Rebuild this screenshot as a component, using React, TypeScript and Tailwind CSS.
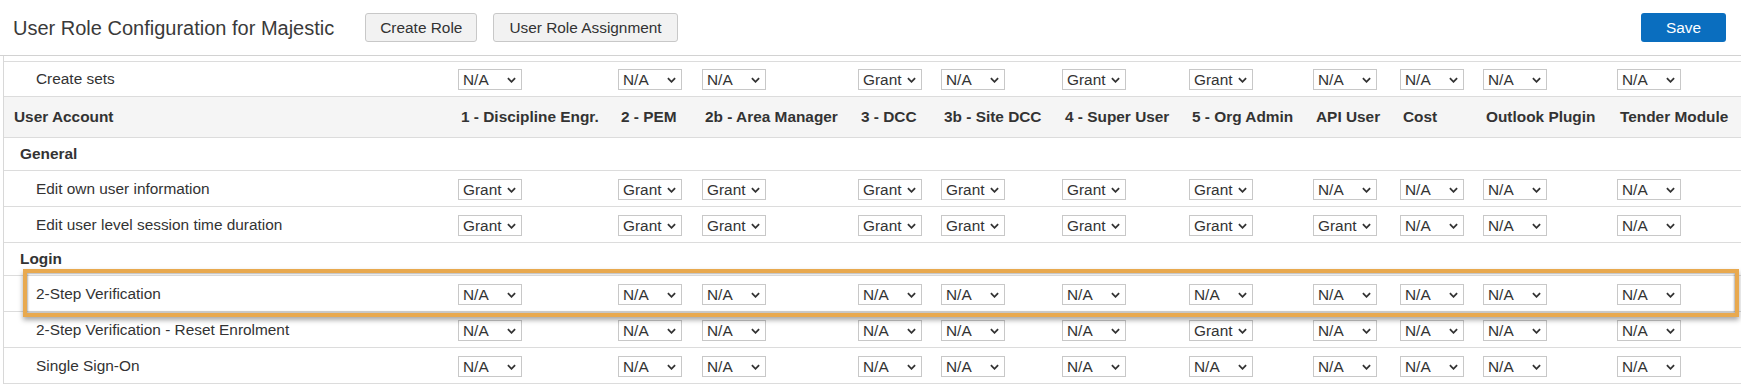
import React from 'react';

type Perm = 'N/A' | 'Grant';

const ROLES = [
  '1 - Discipline Engr.',
  '2 - PEM',
  '2b - Area Manager',
  '3 - DCC',
  '3b - Site DCC',
  '4 - Super User',
  '5 - Org Admin',
  'API User',
  'Cost',
  'Outlook Plugin',
  'Tender Module',
];

// column widths in px, first column is the label column
const COL_WIDTHS = [454, 160, 84, 156, 83, 121, 127, 124, 87, 83, 134, 124];

const G: Perm = 'Grant';
const N: Perm = 'N/A';

type Row =
  | { kind: 'section'; label: string }
  | { kind: 'item'; label: string; perms: Perm[] };

const ROWS: Row[] = [
  { kind: 'section', label: 'General' },
  { kind: 'item', label: 'Edit own user information', perms: [G, G, G, G, G, G, G, N, N, N, N] },
  { kind: 'item', label: 'Edit user level session time duration', perms: [G, G, G, G, G, G, G, G, N, N, N] },
  { kind: 'section', label: 'Login' },
  { kind: 'item', label: '2-Step Verification', perms: [N, N, N, N, N, N, N, N, N, N, N] },
  { kind: 'item', label: '2-Step Verification - Reset Enrolment', perms: [N, N, N, N, N, N, G, N, N, N, N] },
  { kind: 'item', label: 'Single Sign-On', perms: [N, N, N, N, N, N, N, N, N, N, N] },
];

const CREATE_SETS: Perm[] = [N, N, N, G, N, G, G, N, N, N, N];

const PermSelect: React.FC<{ value: Perm }> = ({ value }) => (
  <span className="relative inline-block align-middle">
    <select
      defaultValue={value}
      className="block appearance-none w-[64px] h-[21px] border border-[#c8c8c8] bg-white pl-[4px] pr-[14px] text-[15.4px] leading-[19px] text-[#333]"
    >
      <option value="N/A">N/A</option>
      <option value="Grant">Grant</option>
    </select>
    <svg
      viewBox="0 0 10 6"
      className="pointer-events-none absolute right-[6px] top-[8px] w-[9px] h-[6px]"
      fill="none"
      stroke="#333"
      strokeWidth="2"
    >
      <path d="M1 1l4 4 4-4" />
    </svg>
  </span>
);

const ItemRow: React.FC<{ label: string; perms: Perm[]; height?: string }> = ({ label, perms, height = 'h-[36px]' }) => (
  <tr className={`${height} border-b border-[#dcdcdc]`}>
    <td className="pl-[32px] text-[15.4px] text-[#333] align-middle">{label}</td>
    {perms.map((p, i) => (
      <td key={i} className="align-middle">
        <PermSelect value={p} />
      </td>
    ))}
  </tr>
);

const App: React.FC = () => {
  return (
    <div className="relative w-[1741px] h-[384px] overflow-hidden bg-white font-['Liberation_Sans',Arial,sans-serif] text-[#333]">
      {/* top bar */}
      <div className="flex items-center h-[55px] pl-[13px] pr-[15px]">
        <h1 className="text-[20px] text-[#3a3a3a] font-normal leading-none">User Role Configuration for Majestic</h1>
        <div className="flex items-center gap-[16px] ml-[31px]">
          <button className="h-[29px] px-[14px] rounded-[3px] border border-[#c8c8c8] bg-[#f2f2f2] text-[15.4px] text-[#333]">
            Create Role
          </button>
          <button className="h-[29px] px-[15px] rounded-[3px] border border-[#c8c8c8] bg-[#f2f2f2] text-[15.4px] text-[#333]">
            User Role Assignment
          </button>
        </div>
        <button className="ml-auto h-[29px] w-[85px] rounded-[3px] bg-[#0a6ebf] text-[15.4px] text-white">
          Save
        </button>
      </div>

      {/* permissions grid */}
      <div className="border-t border-[#d2d2d2]">
        <div className="ml-[3px] border-l border-[#d8d8d8] pt-[5px]">
          <table className="table-fixed border-collapse w-[1737px] border-t border-[#dcdcdc]">
            <colgroup>
              {COL_WIDTHS.map((w, i) => (
                <col key={i} style={{ width: w }} />
              ))}
            </colgroup>
            <tbody>
              <ItemRow label="Create sets" perms={CREATE_SETS} height="h-[35px]" />
              <tr className="h-[41px] bg-[#f5f5f5] border-b border-[#dcdcdc]">
                <th className="pl-[10px] text-left text-[15.4px] font-bold text-[#333] whitespace-nowrap">User Account</th>
                {ROLES.map((r) => (
                  <th key={r} className="pl-[3px] text-left text-[15.4px] font-bold text-[#333] whitespace-nowrap">
                    {r}
                  </th>
                ))}
              </tr>
              {ROWS.map((row, idx) =>
                row.kind === 'section' ? (
                  <tr key={idx} className="h-[33px] border-b border-[#dcdcdc]">
                    <td colSpan={12} className="pl-[16px] text-[15.4px] font-bold text-[#333] align-middle">
                      {row.label}
                    </td>
                  </tr>
                ) : (
                  <ItemRow key={idx} label={row.label} perms={row.perms} />
                )
              )}
            </tbody>
          </table>
        </div>
      </div>

      {/* annotation highlight around the 2-Step Verification row */}
      <div className="pointer-events-none absolute left-[23px] top-[269px] w-[1716px] h-[48px] border-4 border-[#e8a94f] shadow-[0_3px_5px_rgba(0,0,0,0.35),inset_0_0_2px_1px_rgba(0,0,0,0.3)]" />
    </div>
  );
};

export default App;
